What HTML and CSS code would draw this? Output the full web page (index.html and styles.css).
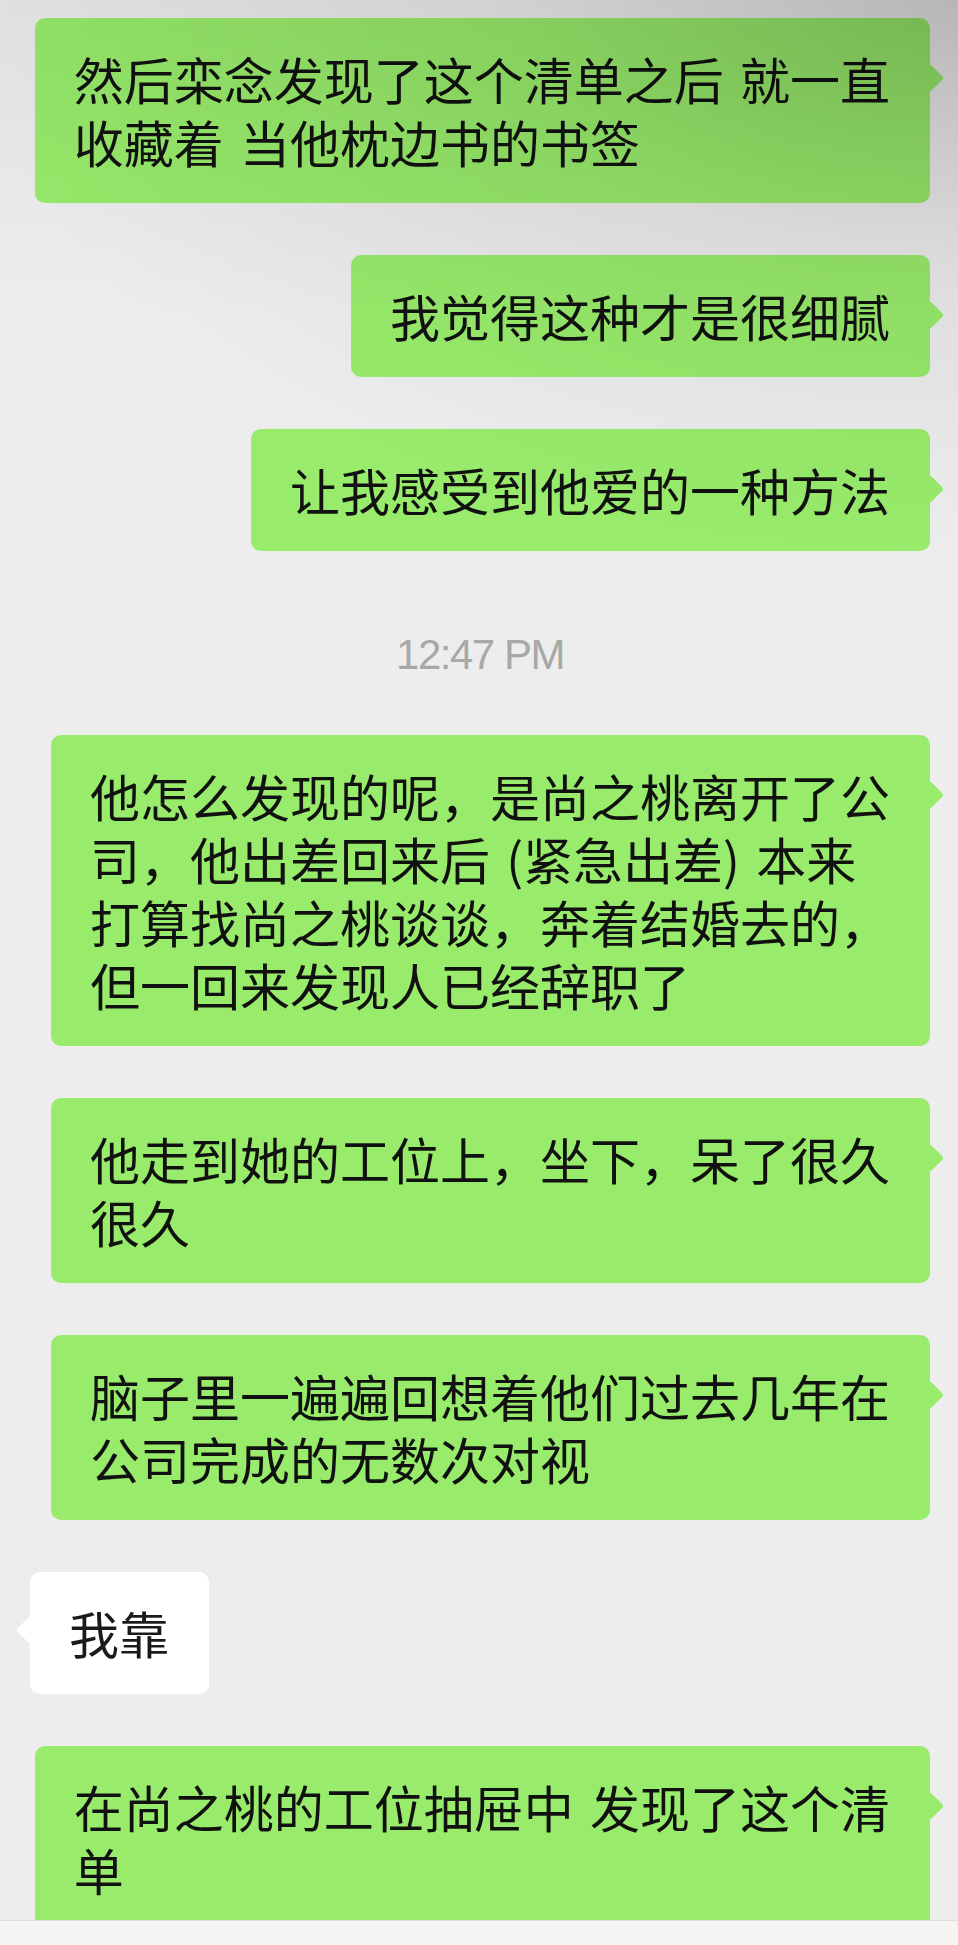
FILE: index.html
```html
<!DOCTYPE html>
<html lang="zh-CN">
<head>
    <meta charset="UTF-8">
    <meta name="viewport" content="width=device-width, initial-scale=1.0">
    <title>聊天记录</title>
    <link rel="stylesheet" href="styles.css">
</head>
<body>
    <div class="chat">
        <div class="msg msg-out">
            <div class="bubble">然后栾念发现了这个清单之后 就一直<br>收藏着 当他枕边书的书签</div>
        </div>
        <div class="msg msg-out">
            <div class="bubble">我觉得这种才是很细腻</div>
        </div>
        <div class="msg msg-out">
            <div class="bubble">让我感受到他爱的一种方法</div>
        </div>

        <div class="time">12:47 PM</div>

        <div class="msg msg-out">
            <div class="bubble">他怎么发现的呢，是尚之桃离开了公<br>司，他出差回来后 (紧急出差) 本来<br>打算找尚之桃谈谈，奔着结婚去的，<br>但一回来发现人已经辞职了</div>
        </div>
        <div class="msg msg-out">
            <div class="bubble">他走到她的工位上，坐下，呆了很久<br>很久</div>
        </div>
        <div class="msg msg-out">
            <div class="bubble">脑子里一遍遍回想着他们过去几年在<br>公司完成的无数次对视</div>
        </div>
        <div class="msg msg-in">
            <div class="bubble">我靠</div>
        </div>
        <div class="msg msg-out">
            <div class="bubble">在尚之桃的工位抽屉中 发现了这个清<br>单</div>
        </div>
    </div>
    <div class="input-bar"></div>
</body>
</html>
```

FILE: styles.css
```css
html, body {
    margin: 0;
    height: 100%;
}
body {
    background-color: #ededed;
    font-family: "Noto Sans CJK SC", sans-serif;
    overflow: hidden;
}
.chat {
    position: relative;
    display: flex;
    flex-direction: column;
    gap: 52px;
    height: 100vh;
    padding: 18px 28px 0 30px;
    box-sizing: border-box;
    overflow: hidden;
}
/* shadow falling over the top of the screen */
.chat::after {
    content: "";
    position: absolute;
    top: 0;
    left: 0;
    right: 0;
    height: 700px;
    background:
        radial-gradient(ellipse 1000px 560px at 100% 0, rgba(0,0,0,0.19), rgba(0,0,0,0.07) 45%, rgba(0,0,0,0) 100%),
        linear-gradient(to bottom, rgba(0,0,0,0.05), rgba(0,0,0,0) 320px);
    pointer-events: none;
}
.msg {
    display: flex;
    flex-shrink: 0;
}
.msg-out {
    justify-content: flex-end;
}
.msg-in {
    justify-content: flex-start;
}
.bubble {
    position: relative;
    padding: 29px 40px 30px 39px;
    font-size: 50px;
    line-height: 63px;
    word-spacing: 5px;
    color: #111;
    border-radius: 10px;
    white-space: nowrap;
}
.msg-out .bubble {
    background-color: #98eb6b;
}
.msg-in .bubble {
    background-color: #fff;
    color: #1a1a1a;
}
.bubble::before {
    content: "";
    position: absolute;
    top: 50px;
    width: 20px;
    height: 20px;
    background: inherit;
    border-radius: 3px;
    transform: rotate(45deg);
}
.msg-out .bubble::before {
    right: -10px;
}
.msg-in .bubble::before {
    left: -10px;
    top: 48px;
}
.time {
    flex-shrink: 0;
    padding: 31px 0 7px;
    text-align: center;
    font-family: "Liberation Sans", Arial, sans-serif;
    font-size: 42px;
    line-height: 42px;
    letter-spacing: -1.5px;
    color: #a8a8a8;
}
.input-bar {
    position: fixed;
    left: 0;
    right: 0;
    bottom: 0;
    height: 24px;
    background-color: #f4f4f3;
    border-top: 1px solid #dedede;
}
```
